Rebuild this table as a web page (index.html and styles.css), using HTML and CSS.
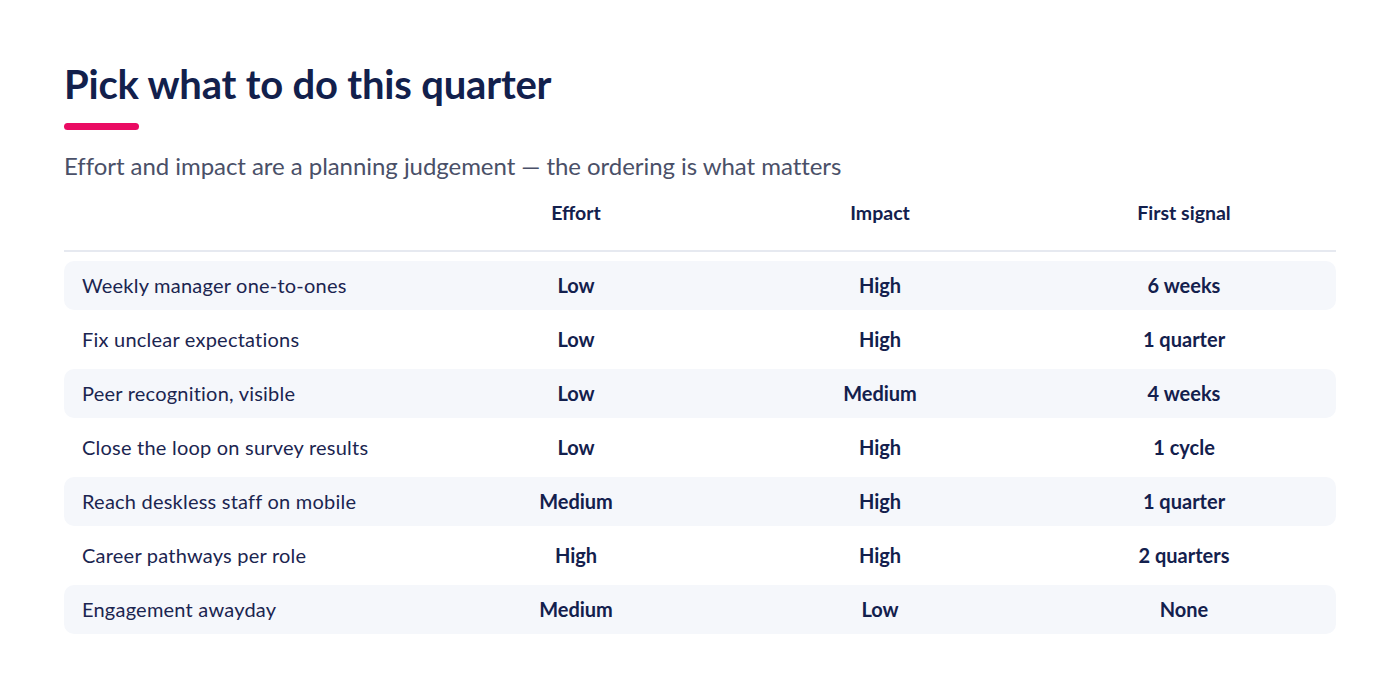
FILE: index.html
```html
<!DOCTYPE html>
<html lang="en">
<head>
<meta charset="utf-8">
<title>Pick what to do this quarter</title>
<link rel="stylesheet" href="styles.css">
</head>
<body>
<main class="page">
  <h1 class="title">Pick what to do this quarter</h1>
  <div class="accent"></div>
  <p class="subtitle">Effort and impact are a planning judgement — the ordering is what matters</p>
  <div class="table">
    <div class="row head">
      <div class="cell label"></div>
      <div class="cell">Effort</div>
      <div class="cell">Impact</div>
      <div class="cell">First signal</div>
    </div>
    <div class="row shaded">
      <div class="cell label">Weekly manager one-to-ones</div>
      <div class="cell">Low</div>
      <div class="cell">High</div>
      <div class="cell">6 weeks</div>
    </div>
    <div class="row">
      <div class="cell label">Fix unclear expectations</div>
      <div class="cell">Low</div>
      <div class="cell">High</div>
      <div class="cell">1 quarter</div>
    </div>
    <div class="row shaded">
      <div class="cell label">Peer recognition, visible</div>
      <div class="cell">Low</div>
      <div class="cell">Medium</div>
      <div class="cell">4 weeks</div>
    </div>
    <div class="row">
      <div class="cell label">Close the loop on survey results</div>
      <div class="cell">Low</div>
      <div class="cell">High</div>
      <div class="cell">1 cycle</div>
    </div>
    <div class="row shaded">
      <div class="cell label">Reach deskless staff on mobile</div>
      <div class="cell">Medium</div>
      <div class="cell">High</div>
      <div class="cell">1 quarter</div>
    </div>
    <div class="row">
      <div class="cell label">Career pathways per role</div>
      <div class="cell">High</div>
      <div class="cell">High</div>
      <div class="cell">2 quarters</div>
    </div>
    <div class="row shaded">
      <div class="cell label">Engagement awayday</div>
      <div class="cell">Medium</div>
      <div class="cell">Low</div>
      <div class="cell">None</div>
    </div>
  </div>
</main>
</body>
</html>
```
FILE: styles.css
```css
* { box-sizing: border-box; }
html, body { margin: 0; padding: 0; background: #ffffff; }
body {
  font-family: "Lato", "Liberation Sans", sans-serif;
  color: #13204d;
}
.page {
  padding: 58px 64px 0 64px;
  display: flex;
  flex-direction: column;
}
.title {
  margin: 0;
  font-size: 40px;
  line-height: 52px;
  font-weight: 700;
  color: #12204c;
  letter-spacing: -0.2px;
}
.accent {
  margin-top: 13px;
  width: 75px;
  height: 7px;
  border-radius: 4px;
  background: #ea0b63;
}
.subtitle {
  margin: 22px 0 0 0;
  font-size: 24px;
  line-height: 28px;
  color: #4a5068;
  letter-spacing: -0.05px;
}
.table {
  margin-top: 15px;
  display: flex;
  flex-direction: column;
  gap: 5px;
}
.row {
  display: grid;
  grid-template-columns: 360px 1fr 1fr 1fr;
  align-items: center;
  height: 49px;
  padding-bottom: 1px;
  border-radius: 10px;
}
.row.shaded { background: #f5f7fb; }
.row.head {
  height: 57px;
  align-items: start;
  border-radius: 0;
  border-bottom: 2px solid #e6e9f0;
  margin-bottom: 4px;
  padding-top: 6px;
  padding-bottom: 0;
}
.cell {
  text-align: center;
  font-size: 20px;
  font-weight: 700;
  color: #13204d;
}
.head .cell { font-size: 19.5px; }
.cell.label {
  text-align: left;
  padding-left: 18px;
  font-weight: 400;
  color: #1b2550;
  letter-spacing: 0.22px;
}
```
